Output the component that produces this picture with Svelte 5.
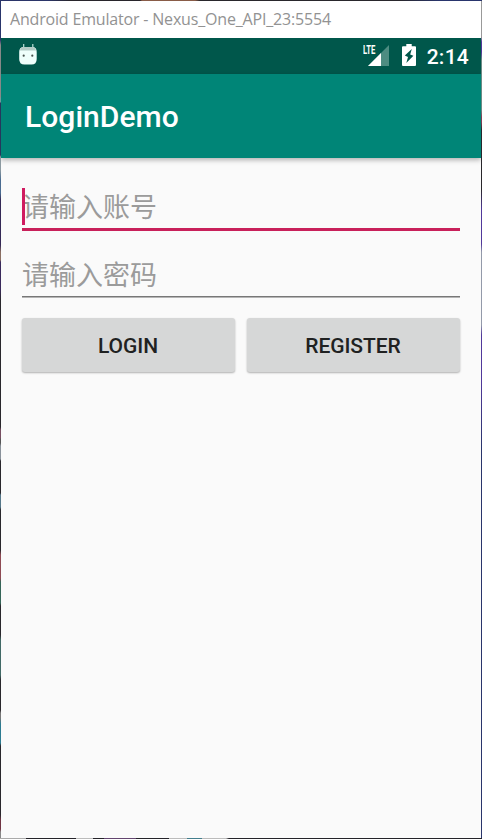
<script>
  let account = $state('');
  let password = $state('');
</script>

<main class="desktop">
  <section class="window">
    <header class="caption"><span>Android Emulator - Nexus_One_API_23:5554</span></header>
    <div class="status">
      <svg class="robot" width="20" height="24" viewBox="0 0 20 24" aria-hidden="true">
        <path d="M5.7 1V6M14.8 1V6" stroke="#b9dfd8" stroke-width="1.2" />
        <path d="M5 4H15Q18.7 4.5 18.7 9V16Q18.7 21.6 13.5 21.6H6.5Q1.2 21.6 1.2 16V9Q1.2 4.5 5 4Z" fill="#effffc" />
        <path d="M5 4H15Q17.4 4.3 18.2 7.4H1.7Q2.5 4.3 5 4Z" fill="#b2cbc6" />
        <circle cx="5.7" cy="12.7" r="1.1" fill="#48534f" />
        <circle cx="14.3" cy="12.7" r="1.1" fill="#48534f" />
      </svg>
      <div class="indicators">
        <div class="signal">
          <svg width="28" height="24" viewBox="0 0 28 24" aria-hidden="true">
            <path d="M27 2V23H6Z" fill="#4d8c81" />
            <path d="M19 10V23H6Z" fill="#fff" />
          </svg>
          <span class="lte">LTE</span>
        </div>
        <svg class="battery" width="14" height="22" viewBox="0 0 14 22" aria-hidden="true">
          <path d="M4.3 0H9.7V2.2H13Q14 2.2 14 3.2V21Q14 22 13 22H1Q0 22 0 21V3.2Q0 2.2 1 2.2H4.3Z" fill="#fff" />
          <path d="M9.8 5L2.8 11.5L6 13L4.3 19L11.4 11.8L8.2 10.6Z" fill="#00574b" />
        </svg>
        <span class="clock">2:14</span>
      </div>
    </div>
    <div class="appbar"><h1>LoginDemo</h1></div>
    <form onsubmit={(e) => e.preventDefault()}>
      <div class="field active">
        <input bind:value={account} placeholder="请输入账号" aria-label="请输入账号" />
        <i class="caret"></i>
      </div>
      <div class="field">
        <input type="password" bind:value={password} placeholder="请输入密码" aria-label="请输入密码" />
      </div>
      <div class="actions">
        <button type="submit">LOGIN</button>
        <button type="button">REGISTER</button>
      </div>
    </form>
  </section>
</main>

<style>
  .desktop {
    box-sizing: border-box;
    width: 482px;
    height: 839px;
    padding: 1px;
    background:
      linear-gradient(to right, #2b3569 0 48px, #28252b 70px 140px, #895c48 142px 195px, #29272c 200px 400px, #29356d 440px) top / 100% 1px no-repeat,
      linear-gradient(to right, #aaa 0 26px, #242329 26px 76px, #bbb 76px 93px, #242329 93px 104px, #63456f 104px 136px, #242329 136px 169px, #bbb 169px 187px, #437e8d 187px 202px, #bbb 202px 226px, #242329 229px) bottom / 100% 1px no-repeat,
      linear-gradient(#29356b 0 40px, #888 45px 97px, #6c9c9b 98px 102px, #26375d 103px 155px, #8c9aa1 157px 170px, #496b90 180px 193px, #342855 200px 245px, #8a6e62 252px 260px, #39295b 262px 289px, #29272c 300px 427px, #774e61 430px 438px, #555 439px 443px, #89919a 446px 459px, #29272c 461px 493px, #557789 495px 507px, #29272c 510px 550px, #8e4a53 555px 578px, #356558 582px 603px, #29272c 606px 635px, #416966 640px 675px, #29272c 680px 710px, #777 713px 718px, #2c7b91 724px 743px, #29272c 746px 815px, #703443 820px 829px, #888 832px) left / 1px 100% no-repeat,
      linear-gradient(#999 0 37px, #51399b 42px 52px, #6d8a85 60px 110px, #843e56 117px 122px, #29272c 130px 190px, #51399b 210px 244px, #939aaa 252px 325px, #51399b 335px 380px, #29356b 450px) right / 1px 100% no-repeat;
  }
  .window {
    height: 837px;
    overflow: hidden;
    background: #fafafa;
    font-family: Roboto, 'Noto Sans CJK SC', sans-serif;
  }
  .caption {
    display: flex;
    box-sizing: border-box;
    height: 37px;
    padding: 7px 0 0 9px;
    background: #fff;
    color: #929292;
    font: 16px/23px 'Open Sans', sans-serif;
    white-space: nowrap;
  }
  .caption span {
    letter-spacing: -0.18px;
  }
  .status {
    display: flex;
    justify-content: space-between;
    box-sizing: border-box;
    height: 36px;
    padding: 5px 12px 0 17px;
    background: #00574b;
    color: #fff;
  }
  .indicators {
    display: flex;
  }
  .signal {
    position: relative;
    width: 28px;
    height: 24px;
    margin-right: 12px;
  }
  .signal svg {
    display: block;
  }
  .lte {
    position: absolute;
    top: 1px;
    left: 1px;
    font-size: 13px;
    font-weight: 700;
    line-height: 12px;
    transform: scaleX(0.59);
    transform-origin: left;
  }
  .battery {
    margin: 1px 11px 0 0;
  }
  .clock {
    font-size: 21px;
    font-weight: 500;
    line-height: 28px;
    letter-spacing: 0.25px;
  }
  .appbar {
    display: flex;
    align-items: center;
    height: 84px;
    padding-left: 24px;
    background: #008577;
    box-shadow: 0 2px 5px rgba(0, 0, 0, 0.3);
  }
  h1 {
    margin: 0;
    color: #fff;
    font-size: 30px;
    font-weight: 500;
    letter-spacing: 0.05px;
  }
  form {
    padding: 26px 21px 0;
  }
  .field {
    position: relative;
    box-sizing: border-box;
    height: 67px;
    padding-top: 2px;
  }
  .field:not(.active) {
    padding-top: 3px;
  }
  .field::after {
    position: absolute;
    bottom: 20px;
    left: 0;
    width: 100%;
    height: 2px;
    background: linear-gradient(#777 1px, #b5b5b5 1px);
    content: '';
  }
  .field.active::after {
    height: 3px;
    background: #c8205a;
  }
  .caret {
    position: absolute;
    top: 4px;
    left: 0;
    width: 3px;
    height: 37px;
    background: #d01b60;
  }
  input {
    display: block;
    box-sizing: border-box;
    width: 100%;
    height: 44px;
    padding: 0;
    border: 0;
    outline: 0;
    background: transparent;
    font: 27px/40px Roboto, 'Noto Sans CJK SC', sans-serif;
  }
  input::placeholder {
    color: #9b9b9b;
    opacity: 1;
  }
  .actions {
    display: grid;
    grid-template-columns: 1fr 1fr;
    gap: 12px;
  }
  button {
    height: 54px;
    padding: 1px 1px 0 0;
    border: 0;
    border-radius: 3px;
    background: #d6d7d7;
    box-shadow: 0 1px 2px rgba(0, 0, 0, 0.3);
    color: #202121;
    font: 500 21px Roboto, sans-serif;
    letter-spacing: -0.05px;
  }
</style>
